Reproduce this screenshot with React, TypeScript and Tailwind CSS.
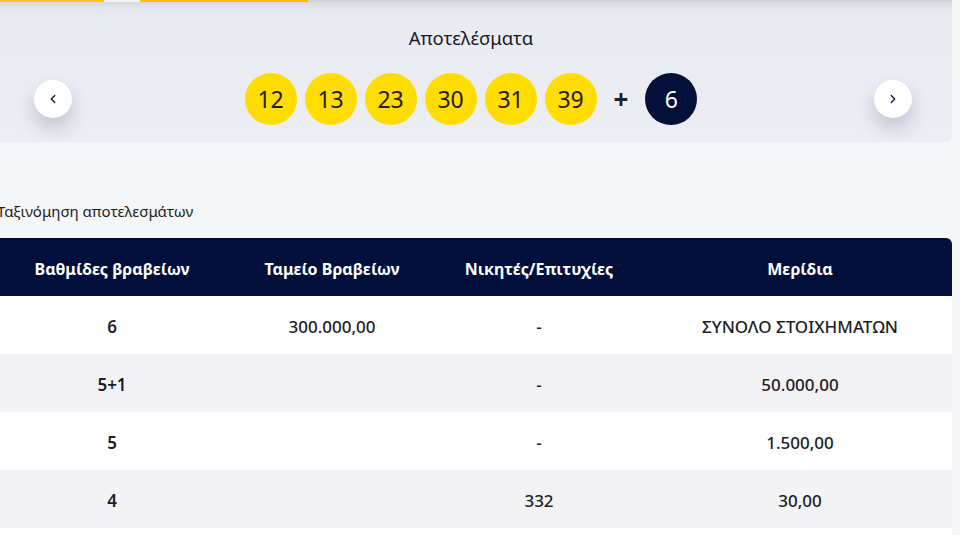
import { ChevronLeft, ChevronRight } from "lucide-react";

const MAIN_BALLS = [12, 13, 23, 30, 31, 39];

const ROWS = [
  { tier: "6", fund: "300.000,00", winners: "-", share: "ΣΥΝΟΛΟ ΣΤΟΙΧΗΜΑΤΩΝ" },
  { tier: "5+1", fund: "", winners: "-", share: "50.000,00" },
  { tier: "5", fund: "", winners: "-", share: "1.500,00" },
  { tier: "4", fund: "", winners: "332", share: "30,00" },
  { tier: "3", fund: "", winners: "", share: "" },
];

const COLS = "grid grid-cols-[244px_196px_218px_304px]";

const ArrowButton = ({ dir }: { dir: "left" | "right" }) => (
  <button className="w-[38px] h-[38px] rounded-full bg-white flex items-center justify-center shadow-[0_10px_18px_rgba(40,50,100,0.22)] text-[#0b1437]">
    {dir === "left" ? <ChevronLeft size={14} strokeWidth={2.2} /> : <ChevronRight size={14} strokeWidth={2.2} />}
  </button>
);

export default function App() {
  return (
    <div
      className="w-[960px] h-[535px] overflow-hidden bg-[#f5f6f8] text-[#1c1c2a]"
      style={{ fontFamily: '"Noto Sans", "Open Sans", sans-serif' }}
    >
      <div className="-ml-[10px] w-[962px]">
        {/* Results carousel */}
        <section className="relative rounded-b-md bg-[linear-gradient(180deg,#d6d7dc_0px,#e4e5eb_8px,#e9ebf2_18px,#eceef3_100%)] pb-[17px]">
          {/* top tab strip */}
          <div className="flex h-[2px]">
            <div className="w-[114px] bg-[#f7c531]" />
            <div className="w-[36px] bg-[#f4f4f4]" />
            <div className="w-[168px] bg-[#f5c000]" />
            <div className="flex-1 bg-[#d2d3d8]" />
          </div>

          <h2 className="pt-[24px] text-center text-[18.5px] leading-6 text-[#1a1a26]">Αποτελέσματα</h2>

          <div className="mt-[23px] flex items-center pl-[44px] pr-[40px]">
            <ArrowButton dir="left" />
            <div className="flex flex-1 items-center justify-center pr-[4px]">
              <div className="flex items-center gap-2">
                {MAIN_BALLS.map((n) => (
                  <span
                    key={n}
                    className="w-[52px] h-[52px] rounded-full bg-[#ffdd00] flex items-center justify-center text-[23px] text-[#1f1f24]"
                  >
                    {n}
                  </span>
                ))}
              </div>
              <span className="mx-[17px] text-[26px] font-bold leading-none text-[#1f1f24]">+</span>
              <span className="w-[52px] h-[52px] rounded-full bg-[#02103a] flex items-center justify-center text-[23px] text-white">
                6
              </span>
            </div>
            <ArrowButton dir="right" />
          </div>
        </section>

        {/* Prize table */}
        <p className="mt-[59px] pl-[7px] text-[15px] leading-5 text-[#1c1c24]">Ταξινόμηση αποτελεσμάτων</p>

        <div className="mt-[17px] rounded-t-md overflow-hidden">
          <div className={`${COLS} h-[58px] pt-[4px] bg-[#020f3a] text-white text-[16px] font-bold`}>
            <div className="flex items-center justify-center">Βαθμίδες βραβείων</div>
            <div className="flex items-center justify-center">Ταμείο Βραβείων</div>
            <div className="flex items-center justify-center">Νικητές/Επιτυχίες</div>
            <div className="flex items-center justify-center">Μερίδια</div>
          </div>
          {ROWS.map((r, i) => (
            <div
              key={r.tier}
              className={`${COLS} h-[58px] pt-[4px] text-[17px] font-medium text-[#1d1d28] ${i % 2 === 0 ? "bg-white" : "bg-[#f3f3f6]"}`}
            >
              <div className="flex items-center justify-center font-semibold">{r.tier}</div>
              <div className="flex items-center justify-center">{r.fund}</div>
              <div className="flex items-center justify-center">{r.winners}</div>
              <div className="flex items-center justify-center">{r.share}</div>
            </div>
          ))}
        </div>
      </div>
    </div>
  );
}
